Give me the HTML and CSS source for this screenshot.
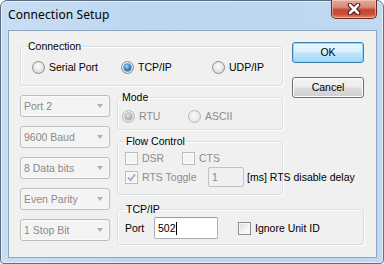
FILE: index.html
```html
<!DOCTYPE html>
<html>
<head>
<meta charset="utf-8">
<link rel="stylesheet" href="styles.css">
</head>
<body>
<div class="window">
  <div class="titlebar">
    <span class="title">Connection Setup</span>
    <div class="close">
      <svg width="14" height="12" viewBox="0 0 14 12">
        <path d="M3 2 L11 10 M11 2 L3 10" stroke="#4a1410" stroke-width="4.6" stroke-linecap="round" fill="none"/>
        <path d="M3 2 L11 10 M11 2 L3 10" stroke="#ffffff" stroke-width="2.6" stroke-linecap="round" fill="none"/>
      </svg>
    </div>
  </div>
  <div class="client">
    <div class="layout">
      <fieldset class="group conn">
        <legend>Connection</legend>
        <div class="conn-row">
          <label class="opt"><span class="radio"></span>Serial Port</label>
          <label class="opt"><span class="radio on"></span>TCP/IP</label>
          <label class="opt"><span class="radio"></span>UDP/IP</label>
        </div>
      </fieldset>

      <div class="buttons">
        <div class="btn default">OK</div>
        <div class="btn">Cancel</div>
      </div>

      <div class="combos">
        <div class="combo">Port 2</div>
        <div class="combo">9600 Baud</div>
        <div class="combo">8 Data bits</div>
        <div class="combo">Even Parity</div>
        <div class="combo">1 Stop Bit</div>
      </div>

      <div class="stack">
        <fieldset class="group mode">
          <legend>Mode</legend>
          <div class="mode-row">
            <label class="opt dis"><span class="radio on dis"></span>RTU</label>
            <label class="opt dis"><span class="radio dis"></span>ASCII</label>
          </div>
        </fieldset>
        <fieldset class="group flow">
          <legend>Flow Control</legend>
          <div class="flow-row1">
            <label class="opt dis"><span class="check dis"></span>DSR</label>
            <label class="opt dis"><span class="check dis"></span>CTS</label>
          </div>
          <div class="flow-row2">
            <label class="opt dis rts"><span class="check dis">
              <svg width="11" height="11" viewBox="0 0 11 11"><path d="M2 5.5 L4.5 8.2 L9 2.5" stroke="#a9a9a9" stroke-width="1.8" fill="none"/></svg>
            </span>RTS Toggle</label>
            <div class="edit dis small">1</div>
            <span class="unit">[ms] RTS disable delay</span>
          </div>
        </fieldset>
      </div>

      <fieldset class="group tcp">
        <legend>TCP/IP</legend>
        <div class="tcp-row">
          <span class="port-label">Port</span>
          <div class="edit port">502<span class="caret"></span></div>
          <label class="opt"><span class="check"></span>Ignore Unit ID</label>
        </div>
      </fieldset>
    </div>
  </div>
</div>
</body>
</html>
```

FILE: styles.css
```css
html, body {
  margin: 0;
  padding: 0;
  width: 384px;
  height: 264px;
  overflow: hidden;
  background: #ffffff;
}

.window {
  width: 384px;
  height: 264px;
  box-sizing: border-box;
  border: 1px solid #5d6e82;
  border-radius: 7px 7px 4px 4px;
  background: linear-gradient(90deg, #c9def3 0%, #bcd6f1 40%, #c0d9f2 100%);
  box-shadow: inset 0 0 0 1px rgba(255,255,255,0.55);
  display: flex;
  flex-direction: column;
  font-family: "Liberation Sans", Arial, sans-serif;
  font-size: 10.5px;
  color: #000;
}

.titlebar {
  height: 29px;
  display: flex;
  align-items: flex-start;
  flex: none;
}

.title {
  font-family: "Noto Sans", "Open Sans", sans-serif;
  font-size: 12px;
  line-height: 16px;
  margin: 6px 0 0 7px;
  color: #000;
  letter-spacing: 0.1px;
}

.close {
  margin-left: auto;
  margin-right: 6px;
  margin-top: -1px;
  width: 46px;
  height: 19px;
  box-sizing: border-box;
  border: 1px solid #6a2a22;
  border-top: none;
  border-radius: 0 0 5px 5px;
  background: linear-gradient(#e8a899 0%, #d98a79 40%, #c4452f 55%, #c9503a 80%, #e08a6a 100%);
  box-shadow: inset 0 0 0 1px rgba(255,220,210,0.5);
  display: flex;
  align-items: center;
  justify-content: center;
}

.client {
  margin: 0 6px 0 7px;
  height: 228px;
  box-sizing: border-box;
  border: 1px solid #8ea6bf;
  background: #f0f0f0;
  padding: 9px 0 0 11px;
  flex: none;
}

.layout {
  display: grid;
  grid-template-columns: 90px 7px 166px 9px 72px;
  grid-template-rows: 51px 112px auto;
}

.group {
  margin: 0;
  padding: 0;
  border: 1px solid #d5dfe5;
  border-radius: 3px;
  box-shadow: inset 1px 1px 0 #ffffff, 1px 1px 0 #ffffff;
  box-sizing: border-box;
  min-width: 0;
}

.group legend {
  padding: 0 1px;
  margin-left: 6px;
  line-height: 13px;
  height: 13px;
}

.conn {
  grid-column: 1 / 4;
  grid-row: 1;
  height: 46px;
}

.conn-row {
  display: grid;
  grid-template-columns: 89px 91px auto;
  margin: 8px 0 0 11px;
}

.opt {
  display: flex;
  align-items: center;
  line-height: 13px;
  height: 13px;
  white-space: nowrap;
}

.opt.dis {
  color: #8c8c8c;
}

.radio {
  position: relative;
  width: 13px;
  height: 13px;
  box-sizing: border-box;
  border-radius: 50%;
  border: 1px solid #8a8a8a;
  background: radial-gradient(circle at 45% 40%, #ffffff 0%, #eaeaea 45%, #cfcfcf 100%);
  margin-right: 4px;
  flex: none;
}

.radio.on::after {
  content: "";
  position: absolute;
  left: 2px;
  top: 2px;
  width: 7px;
  height: 7px;
  border-radius: 50%;
  background: radial-gradient(circle at 40% 35%, #a8e3fc 0%, #2f8fd4 45%, #0c4580 100%);
  box-shadow: 0 0 0 0.5px #22557f;
}

.radio.dis {
  border-color: #b8b8b8;
  background: radial-gradient(circle at 45% 40%, #fbfbfb 0%, #ececec 50%, #dcdcdc 100%);
}

.radio.on.dis::after {
  background: radial-gradient(circle at 40% 35%, #e8e8e8 0%, #b9b9b9 50%, #9a9a9a 100%);
  box-shadow: 0 0 0 0.5px #9a9a9a;
}

.check {
  width: 13px;
  height: 13px;
  box-sizing: border-box;
  border: 1px solid #8e8f8f;
  background: linear-gradient(135deg, #d9d9d9 0%, #f4f4f4 60%, #ffffff 100%);
  box-shadow: inset 0 0 0 1px #f6f6f6;
  margin-right: 4px;
  flex: none;
  display: flex;
  align-items: center;
  justify-content: center;
}

.check.dis {
  border-color: #bcbcbc;
  background: #f4f4f4;
  box-shadow: inset 0 0 0 1px #fbfbfb;
}

.buttons {
  grid-column: 5;
  grid-row: 1 / 3;
  align-self: start;
  margin-top: 2px;
  display: flex;
  flex-direction: column;
  gap: 14px;
}

.btn {
  width: 72px;
  height: 21px;
  box-sizing: border-box;
  border: 1px solid #707070;
  border-radius: 3px;
  background: linear-gradient(#f3f3f3 0%, #ececec 48%, #dddddd 52%, #cfcfcf 100%);
  box-shadow: inset 0 0 0 1px #fbfbfb;
  text-align: center;
  line-height: 19px;
}

.btn.default {
  border-color: #3c7fb1;
  background: linear-gradient(#eaf6fd 0%, #d9f0fc 48%, #bee6fd 52%, #a7d9f5 100%);
  box-shadow: inset 0 0 0 1px #8fd8f8;
}

.combos {
  grid-column: 1;
  grid-row: 2 / 4;
  margin-top: 4px;
  display: flex;
  flex-direction: column;
  gap: 9px;
}

.combo {
  height: 22px;
  box-sizing: border-box;
  border: 1px solid #bdbdbd;
  border-radius: 3px;
  background: #f4f4f4;
  box-shadow: inset 0 0 0 1px #fafafa;
  color: #8a8a8a;
  display: flex;
  align-items: center;
  padding-left: 3px;
  line-height: 13px;
}

.combo::after {
  content: "";
  margin-left: auto;
  margin-right: 6px;
  border-top: 4px solid #b0b0b0;
  border-left: 3.5px solid transparent;
  border-right: 3.5px solid transparent;
}

.stack {
  grid-column: 3;
  grid-row: 2;
  display: flex;
  flex-direction: column;
  gap: 5px;
}

.mode {
  height: 39px;
}

.mode legend {
  margin-left: 3px;
}

.mode-row {
  display: grid;
  grid-template-columns: 66px auto;
  margin: 6px 0 0 4px;
}

.flow {
  height: 60px;
}

.flow legend,
.tcp legend {
  margin-left: 7px;
}

.flow-row1 {
  display: grid;
  grid-template-columns: 57px auto;
  margin: 4px 0 0 7px;
}

.flow-row2 {
  display: flex;
  align-items: center;
  margin: 2px 0 0 7px;
  height: 20px;
}

.rts {
  width: 83px;
  flex: none;
}

.edit {
  height: 20px;
  box-sizing: border-box;
  border: 1px solid #abadb3;
  border-top-color: #9a9ca3;
  border-radius: 2px;
  background: #ffffff;
  display: flex;
  align-items: center;
  padding-left: 3px;
  line-height: 13px;
  flex: none;
}

.edit.dis {
  border-color: #c2c2c2;
  background: #f0f0f0;
  color: #8a8a8a;
}

.edit.small {
  width: 36px;
}

.unit {
  margin-left: 3px;
  white-space: nowrap;
}

.tcp {
  grid-column: 3 / 6;
  grid-row: 3;
  height: 42px;
}

.tcp-row {
  display: flex;
  align-items: center;
  margin: 1px 0 0 7px;
}

.port-label {
  width: 29px;
}

.edit.port {
  width: 64px;
  height: 22px;
  margin-right: 20px;
}

.caret {
  display: inline-block;
  width: 1px;
  height: 13px;
  background: #000;
}
```
